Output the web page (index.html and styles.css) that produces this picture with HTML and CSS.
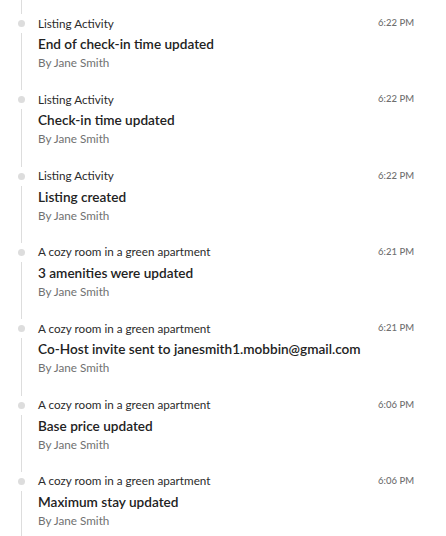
FILE: index.html
```html
<!DOCTYPE html>
<html lang="en">
<head>
<meta charset="utf-8">
<link rel="stylesheet" href="styles.css">
</head>
<body>
<div class="feed">
  <div class="lead"><span class="rail-line"></span></div>

  <article class="entry">
    <div class="rail"><span class="dot"></span><span class="rail-line"></span></div>
    <div class="body">
      <div class="head"><span class="src">Listing Activity</span><span class="time">6:22 PM</span></div>
      <div class="title">End of check-in time updated</div>
      <div class="by">By Jane Smith</div>
    </div>
  </article>

  <article class="entry">
    <div class="rail"><span class="dot"></span><span class="rail-line"></span></div>
    <div class="body">
      <div class="head"><span class="src">Listing Activity</span><span class="time">6:22 PM</span></div>
      <div class="title">Check-in time updated</div>
      <div class="by">By Jane Smith</div>
    </div>
  </article>

  <article class="entry">
    <div class="rail"><span class="dot"></span><span class="rail-line"></span></div>
    <div class="body">
      <div class="head"><span class="src">Listing Activity</span><span class="time">6:22 PM</span></div>
      <div class="title">Listing created</div>
      <div class="by">By Jane Smith</div>
    </div>
  </article>

  <article class="entry">
    <div class="rail"><span class="dot"></span><span class="rail-line"></span></div>
    <div class="body">
      <div class="head"><span class="src">A cozy room in a green apartment</span><span class="time">6:21 PM</span></div>
      <div class="title">3 amenities were updated</div>
      <div class="by">By Jane Smith</div>
    </div>
  </article>

  <article class="entry">
    <div class="rail"><span class="dot"></span><span class="rail-line"></span></div>
    <div class="body">
      <div class="head"><span class="src">A cozy room in a green apartment</span><span class="time">6:21 PM</span></div>
      <div class="title">Co-Host invite sent to janesmith1.mobbin@gmail.com</div>
      <div class="by">By Jane Smith</div>
    </div>
  </article>

  <article class="entry">
    <div class="rail"><span class="dot"></span><span class="rail-line"></span></div>
    <div class="body">
      <div class="head"><span class="src">A cozy room in a green apartment</span><span class="time">6:06 PM</span></div>
      <div class="title">Base price updated</div>
      <div class="by">By Jane Smith</div>
    </div>
  </article>

  <article class="entry">
    <div class="rail"><span class="dot"></span><span class="rail-line"></span></div>
    <div class="body">
      <div class="head"><span class="src">A cozy room in a green apartment</span><span class="time">6:06 PM</span></div>
      <div class="title">Maximum stay updated</div>
      <div class="by">By Jane Smith</div>
    </div>
  </article>
</div>
</body>
</html>
```

FILE: styles.css
```css
html, body {
  margin: 0;
  padding: 0;
  background: #ffffff;
}

body {
  font-family: "Lato", "Liberation Sans", sans-serif;
  color: #222222;
  width: 446px;
  height: 536px;
  overflow: hidden;
}

.feed {
  display: flex;
  flex-direction: column;
  padding: 0 32px 0 15px;
}

.lead {
  display: flex;
  flex-direction: column;
  align-items: center;
  width: 13px;
  height: 14px;
}

.entry {
  display: flex;
  gap: 10px;
  height: 76.33px;
}

.rail {
  width: 13px;
  flex: none;
  display: flex;
  flex-direction: column;
  align-items: center;
}

.dot {
  width: 7px;
  height: 7px;
  border-radius: 50%;
  background: #dddddd;
  margin: 6px 0;
  flex: none;
}

.rail-line {
  width: 1px;
  flex: 1;
  background: #dddddd;
}

.body {
  flex: 1;
  display: flex;
  flex-direction: column;
}

.head {
  display: flex;
  justify-content: space-between;
  align-items: center;
  height: 19px;
  padding-bottom: 2px;
  box-sizing: border-box;
  margin-bottom: 1px;
}

.src {
  font-size: 11.7px;
  color: #2b2b2b;
}

.time {
  font-size: 9.5px;
  font-weight: 500;
  color: #6f6f6f;
}

.title {
  font-size: 13.6px;
  font-weight: 600;
  line-height: 20px;
}

.by {
  font-size: 11.7px;
  color: #717171;
  line-height: 16px;
}
```
